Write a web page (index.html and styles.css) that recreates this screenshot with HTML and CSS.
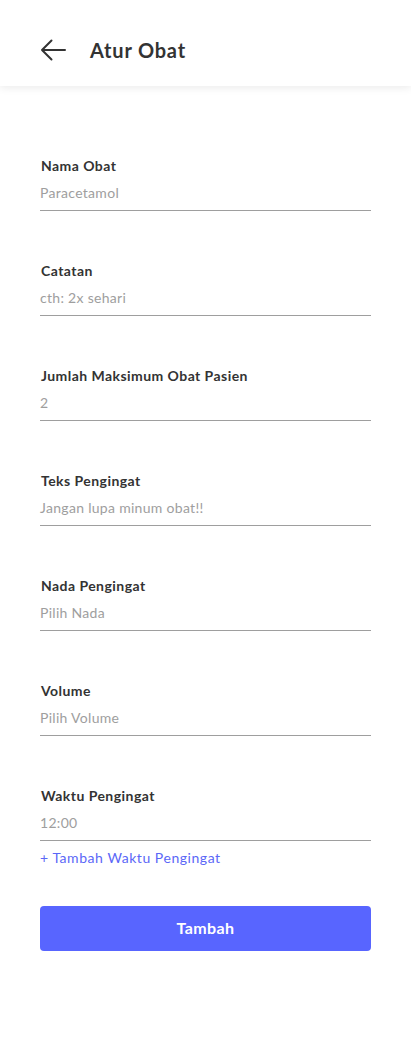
FILE: index.html
```html
<!DOCTYPE html>
<html lang="id">
<head>
<meta charset="utf-8">
<link rel="stylesheet" href="styles.css">
</head>
<body>
<header class="topbar">
  <svg class="back" width="26" height="22" viewBox="0 0 26 22"><path d="M25 11H2M11.5 1.5L2 11l9.5 9.5" fill="none" stroke="#333" stroke-width="2" stroke-linecap="round" stroke-linejoin="round"/></svg>
  <h1 class="title">Atur Obat</h1>
</header>
<main class="form">
  <div class="field"><label class="label">Nama Obat</label><div class="input">Paracetamol</div></div>
  <div class="field"><label class="label">Catatan</label><div class="input">cth: 2x sehari</div></div>
  <div class="field"><label class="label">Jumlah Maksimum Obat Pasien</label><div class="input">2</div></div>
  <div class="field"><label class="label">Teks Pengingat</label><div class="input">Jangan lupa minum obat!!</div></div>
  <div class="field"><label class="label">Nada Pengingat</label><div class="input">Pilih Nada</div></div>
  <div class="field"><label class="label">Volume</label><div class="input">Pilih Volume</div></div>
  <div class="field"><label class="label">Waktu Pengingat</label><div class="input">12:00</div></div>
  <a class="add-link">+ Tambah Waktu Pengingat</a>
  <button class="submit">Tambah</button>
</main>
</body>
</html>
```
FILE: styles.css
```css
* { box-sizing: border-box; }
body {
  margin: 0;
  background: #fff;
  font-family: "Lato", "Open Sans", sans-serif;
  color: #333;
}
.topbar {
  height: 86px;
  display: flex;
  align-items: center;
  padding: 14px 40px 0 40px;
  gap: 24px;
  box-shadow: 0 2px 8px rgba(0,0,0,0.08);
}
.back { flex: none; }
.title {
  margin: 0;
  font-size: 20px;
  font-weight: 700;
  color: #333;
  line-height: 24px;
  letter-spacing: 0.8px;
}
.form {
  padding: 70px 40px 0 40px;
  display: flex;
  flex-direction: column;
}
.field {
  display: flex;
  flex-direction: column;
  margin-bottom: 50px;
}
.field:nth-last-of-type(1) { margin-bottom: 0; }
.label {
  font-size: 14px;
  font-weight: 700;
  line-height: 20px;
  color: #333;
  letter-spacing: 0.45px;
  padding-left: 1px;
}
.input {
  margin-top: 7px;
  font-size: 14px;
  line-height: 20px;
  color: #9e9e9e;
  padding-bottom: 7px;
  border-bottom: 1px solid #9e9e9e;
  letter-spacing: 0.3px;
}
.add-link {
  margin-top: 7px;
  font-size: 14px;
  line-height: 20px;
  color: #5b67f7;
  letter-spacing: 0.55px;
}
.submit {
  margin-top: 38px;
  height: 45px;
  border: none;
  border-radius: 4px;
  background: #5865ff;
  color: #fff;
  font-family: inherit;
  font-size: 16px;
  font-weight: 700;
  letter-spacing: 0.4px;
  padding-bottom: 3px;
}
```
